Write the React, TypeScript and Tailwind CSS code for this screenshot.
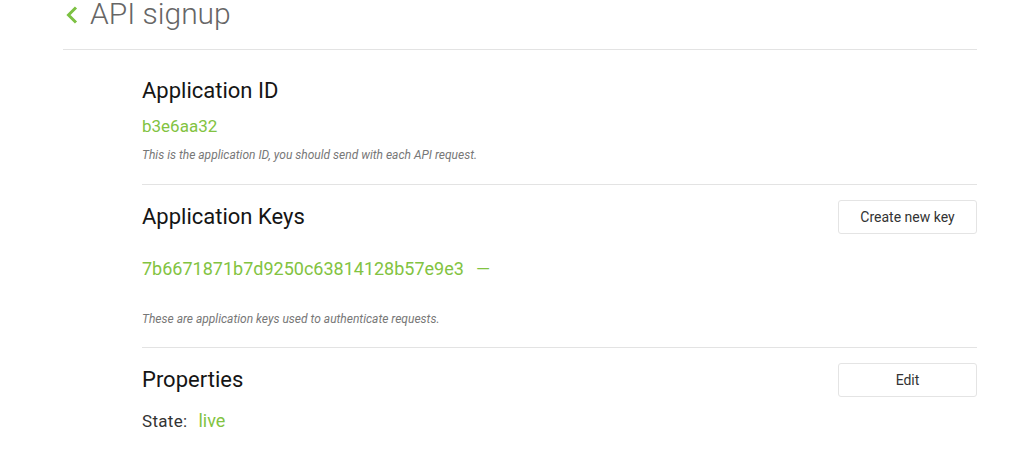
const green = "text-[#82c341]";

const Section = ({ children, className }: { children: React.ReactNode; className?: string }) => (
  <div className={"ml-[79px] border-t border-[#e3e3e3] " + (className ?? "")}>{children}</div>
);

const Btn = ({ label }: { label: string }) => (
  <button
    type="button"
    className="w-[139px] h-[34px] border border-[#e4e4e4] rounded-[3px] bg-white text-[14px] text-[#333] shrink-0"
  >
    {label}
  </button>
);

export default function App() {
  return (
    <div className="w-[1013px] h-[452px] bg-white font-['Roboto',sans-serif] overflow-hidden">
      <div className="ml-[63px] w-[914px]">
        <div className="flex items-center h-[28px] mb-[21px]">
          <svg width="14" height="18" viewBox="0 0 14 18" className="ml-[2px] mr-[11px] mt-[2px]">
            <path d="M11 1.5 L3.5 9 L11 16.5" fill="none" stroke="#7cc142" strokeWidth="3" />
          </svg>
          <h1 className="text-[30px] leading-[28px] font-light text-[#666]">API signup</h1>
        </div>

        <div className="border-t border-[#e3e3e3]">
          <div className="ml-[79px] pt-[29px] pb-[22px]">
            <h2 className="text-[22px] leading-[24px] text-[#151515]">Application ID</h2>
            <p className={"mt-[13px] text-[17px] leading-[20px] " + green}>b3e6aa32</p>
            <p className="mt-[12px] text-[12px] leading-[14px] italic text-[#777]">
              This is the application ID, you should send with each API request.
            </p>
          </div>

          <Section className="pt-[15px] pb-[21px]">
            <div className="flex items-center justify-between">
              <h2 className="text-[22px] leading-[24px] text-[#151515]">Application Keys</h2>
              <Btn label="Create new key" />
            </div>
            <div className={"mt-[25px] flex items-center gap-[12px] text-[18px] leading-[20px] " + green}>
              <span>7b6671871b7d9250c63814128b57e9e3</span>
              <span>—</span>
            </div>
            <p className="mt-[33px] text-[12px] leading-[14px] italic text-[#777]">
              These are application keys used to authenticate requests.
            </p>
          </Section>

          <Section className="pt-[15px]">
            <div className="flex items-center justify-between">
              <h2 className="text-[22px] leading-[24px] text-[#151515]">Properties</h2>
              <Btn label="Edit" />
            </div>
            <div className="mt-[14px] flex items-baseline text-[17px] leading-[20px] text-[#333]">
              <span className="tracking-[0.3px]">State:</span>
              <span className={"ml-[11px] text-[18px] " + green}>live</span>
            </div>
          </Section>
        </div>
      </div>
    </div>
  );
}
